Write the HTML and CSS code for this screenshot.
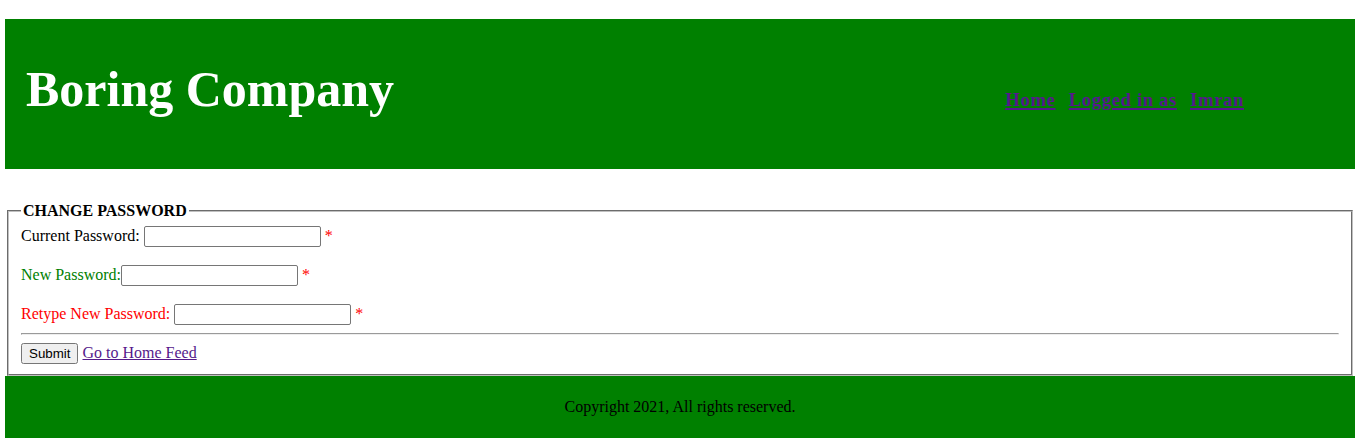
FILE: index.html
```html
<!DOCTYPE html>
<html>
<head>
<meta charset="utf-8">
<title>Change Password</title>
<link rel="stylesheet" href="styles.css">
</head>
<body>
<header class="site-header">
  <h1 class="brand">Boring Company</h1>
  <nav class="nav">
    <a href="#" class="nav-link">Home</a>
    <a href="#" class="nav-link">Logged in as</a>
    <a href="#" class="nav-link">Imran</a>
  </nav>
</header>
<form class="form">
  <fieldset class="box">
    <legend class="legend">CHANGE PASSWORD</legend>
    <div class="row">
      <label class="lbl">Current Password: </label><input type="password" class="field"> <span class="req">*</span>
    </div>
    <div class="row">
      <label class="lbl lbl-green">New Password:</label><input type="password" class="field"> <span class="req">*</span>
    </div>
    <div class="row row-last">
      <label class="lbl lbl-red">Retype New Password: </label><input type="password" class="field"> <span class="req">*</span>
    </div>
    <hr class="rule">
    <div class="actions">
      <button type="button" class="btn">Submit</button> <a href="#" class="home-link">Go to Home Feed</a>
    </div>
  </fieldset>
</form>
<footer class="site-footer">
  <p class="copy">Copyright 2021, All rights reserved.</p>
</footer>
</body>
</html>
```
FILE: styles.css
```css
html, body {
  background: #fff;
}
body {
  margin: 19px 8px 0 5px;
  font-family: "Liberation Serif", "Times New Roman", serif;
  font-size: 16px;
  color: #000;
}
.site-header {
  background: #008000;
  height: 150px;
  box-sizing: border-box;
  display: flex;
  align-items: baseline;
  padding: 41px 111px 0 21px;
}
.brand {
  margin: 0;
  font-size: 50px;
  font-weight: bold;
  color: #fff;
  line-height: normal;
}
.nav {
  margin-left: auto;
  font-size: 18.72px;
  font-weight: bold;
  letter-spacing: 0.6px;
}
.nav-link {
  color: #551a8b;
  text-decoration: underline;
  text-decoration-thickness: 2px;
  text-underline-offset: 2px;
}
.nav-link + .nav-link {
  margin-left: 8px;
}
.form {
  margin: 33px 0 0 0;
}
.box {
  margin: 0 2px;
  padding: 6px 12px 10px 12px;
  border: 2px groove #c0c0c0;
}
.legend {
  padding: 0 2px;
  font-weight: bold;
  font-size: 16px;
}
.row {
  margin-bottom: 18px;
}
.row-last {
  margin-bottom: 0;
}
.lbl-green {
  color: #008000;
}
.lbl-red {
  color: #ff0000;
}
.req {
  color: #ff0000;
}
.field {
  font-family: Arial, "Liberation Sans", sans-serif;
  font-size: 13.333px;
  height: 21px;
  box-sizing: border-box;
  padding: 1px 3px;
  border: 1px solid #767676;
  border-radius: 2px;
  margin: 0;
  width: 177px;
}
.rule {
  margin: 8px 0 8px;
}
.btn {
  font-family: Arial, "Liberation Sans", sans-serif;
  font-size: 13.333px;
  padding: 1px 6px;
  height: 21px;
  margin: 0;
}
.home-link {
  color: #551a8b;
}
.site-footer {
  background: #008000;
  height: 62px;
  display: flex;
  align-items: center;
  justify-content: center;
}
.copy {
  margin: 0;
}
```
